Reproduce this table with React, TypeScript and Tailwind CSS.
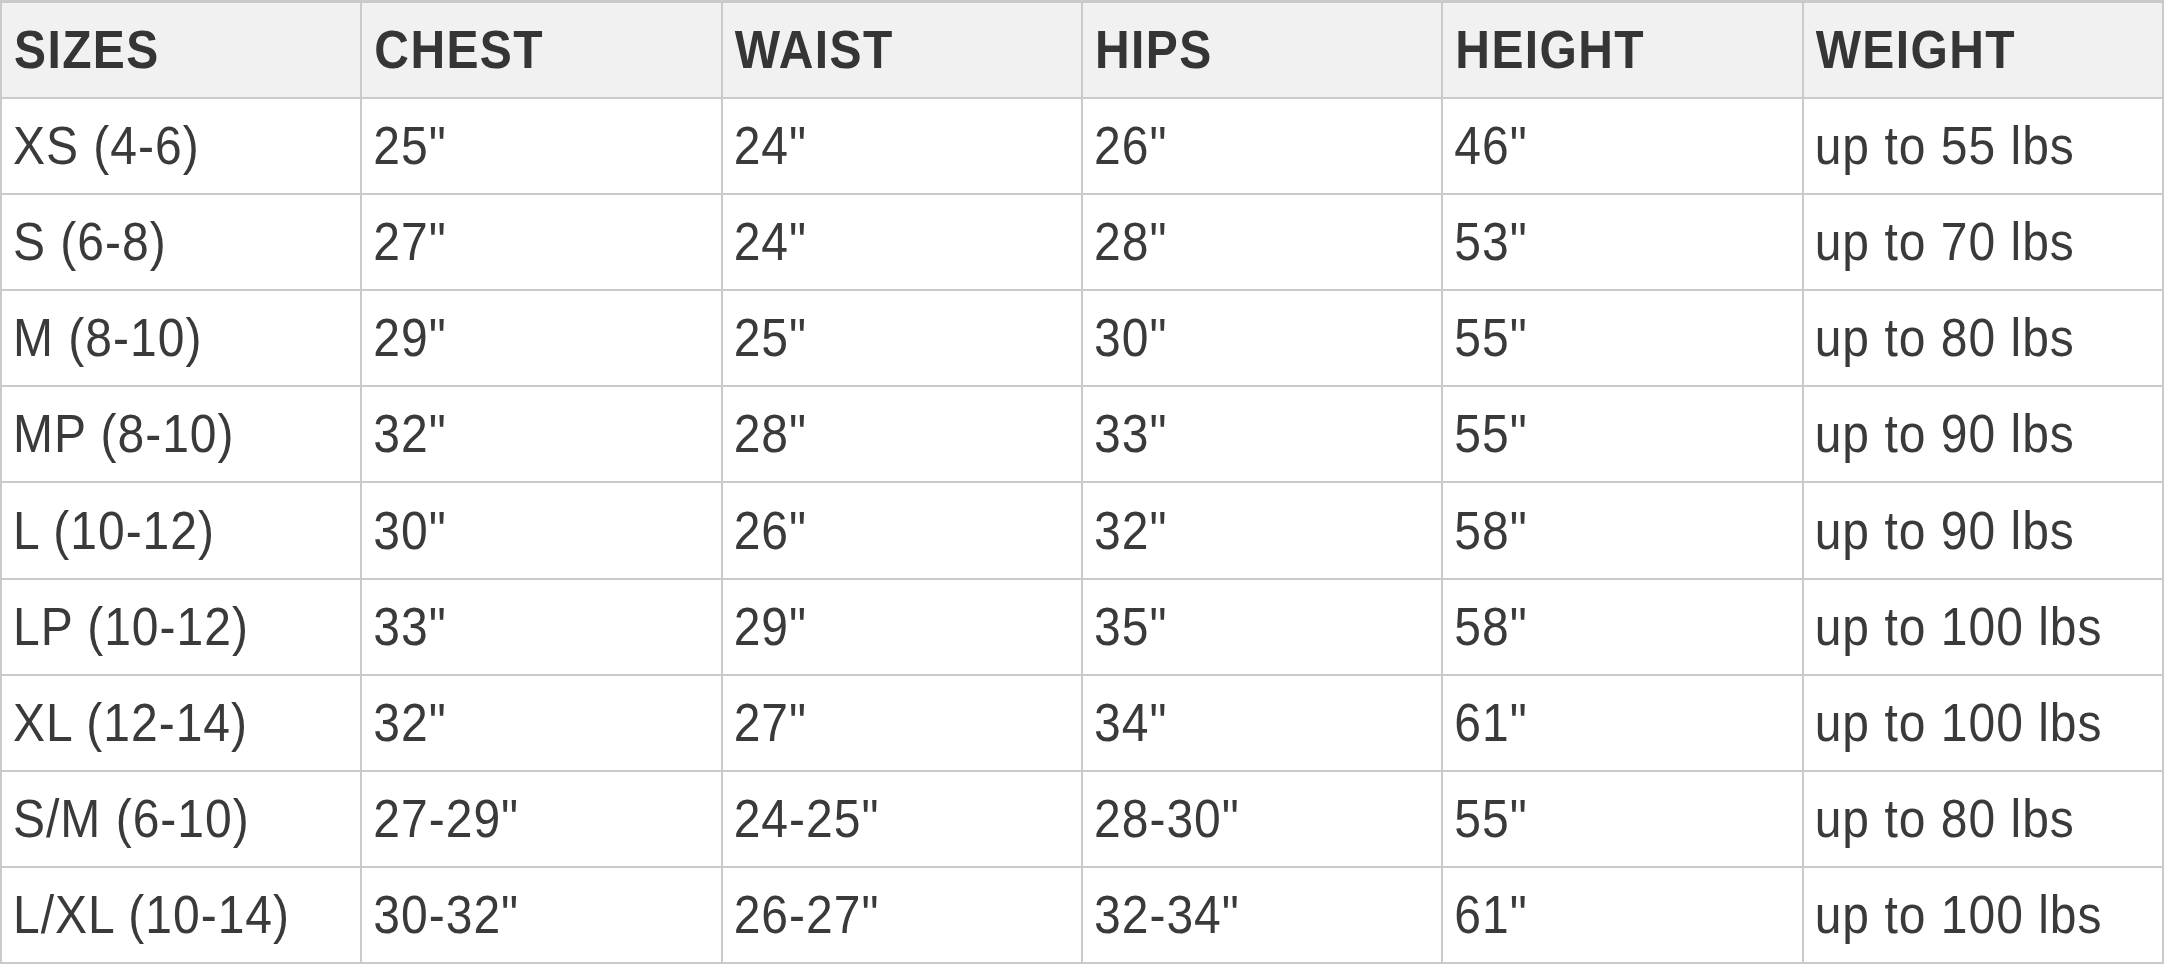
import React from "react";

const header = ["SIZES", "CHEST", "WAIST", "HIPS", "HEIGHT", "WEIGHT"];
const rows: string[][] = [
  ["XS (4-6)", '25"', '24"', '26"', '46"', "up to 55 lbs"],
  ["S (6-8)", '27"', '24"', '28"', '53"', "up to 70 lbs"],
  ["M (8-10)", '29"', '25"', '30"', '55"', "up to 80 lbs"],
  ["MP (8-10)", '32"', '28"', '33"', '55"', "up to 90 lbs"],
  ["L (10-12)", '30"', '26"', '32"', '58"', "up to 90 lbs"],
  ["LP (10-12)", '33"', '29"', '35"', '58"', "up to 100 lbs"],
  ["XL (12-14)", '32"', '27"', '34"', '61"', "up to 100 lbs"],
  ["S/M (6-10)", '27-29"', '24-25"', '28-30"', '55"', "up to 80 lbs"],
  ["L/XL (10-14)", '30-32"', '26-27"', '32-34"', '61"', "up to 100 lbs"],
];

export default function App() {
  return (
    <div className="w-[2164px] h-[964px] bg-white" style={{ fontFamily: '"Liberation Sans", Arial, sans-serif' }}>
      <div className="grid h-full w-full grid-cols-6 grid-rows-[repeat(10,1fr)] gap-[2px] bg-[#cacaca] p-[2px] border-t border-[#c4cbd6]">
        {header.map((h) => (
          <div key={h} className="flex items-center bg-[#f1f1f1] pl-[12px]">
            <span className="inline-block scale-y-110 text-[48px] font-bold leading-none tracking-[1.4px] text-[#353535]">{h}</span>
          </div>
        ))}
        {rows.map((r, i) =>
          r.map((c, j) => (
            <div key={`${i}-${j}`} className="flex items-center bg-white pl-[11px]">
              <span className="inline-block scale-y-110 text-[48px] leading-none tracking-[1px] text-[#3a3a3a]">{c}</span>
            </div>
          ))
        )}
      </div>
    </div>
  );
}
